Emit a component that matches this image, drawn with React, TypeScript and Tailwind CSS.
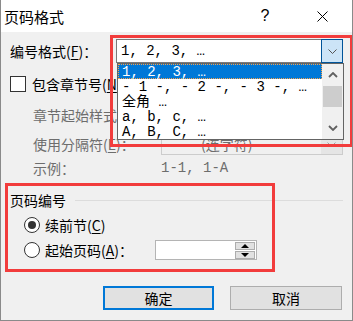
const Key = ({ k }: { k: string }) => (
  <span>
    (<span className="underline underline-offset-2">{k}</span>)
  </span>
);

const ScrollArrow = ({ up }: { up?: boolean }) => (
  <svg width="10" height="6" viewBox="0 0 10 6">
    <polyline
      points={up ? '1,5 5,1 9,5' : '1,1 5,5 9,1'}
      fill="none"
      stroke="#606060"
      strokeWidth="1.8"
    />
  </svg>
);

const SpinTriangle = ({ up }: { up?: boolean }) => (
  <svg width="8" height="4" viewBox="0 0 8 4">
    <polygon points={up ? '0,4 4,0 8,4' : '0,0 8,0 4,4'} fill="#000" />
  </svg>
);

const mono = "font-['Liberation_Mono','Noto_Sans_CJK_SC',monospace]";

const listItems = ['- 1 -, - 2 -, - 3 -, …', '全角 …', 'a, b, c, …', 'A, B, C, …'];

export default function App() {
  return (
    <div className="relative w-[353px] h-[321px] bg-[#f0f0f0] border-x border-b border-[#8a8a8a] overflow-hidden text-[14px] text-black font-['Noto_Sans_CJK_SC',sans-serif] leading-none">
      {/* title bar */}
      <div className="flex items-center h-[32px] bg-white pl-[3px] pr-[7px]">
        <span className="text-[15px]">页码格式</span>
        <span className="ml-auto w-[46px] text-center text-[16px] font-['Liberation_Sans',sans-serif]">?</span>
        <span className="ml-[11px] w-[46px] flex justify-center">
          <svg width="11" height="11" viewBox="0 0 11 11">
            <path d="M0.5 0.5 L10.5 10.5 M10.5 0.5 L0.5 10.5" stroke="#000" strokeWidth="1" />
          </svg>
        </span>
      </div>

      <div className="flex flex-col pl-[9px] pr-[9px]">
        {/* number format */}
        <div className="flex items-center h-[24px] mt-[7px]">
          <span className="w-[106px] shrink-0">
            编号格式<Key k="F" />：
          </span>
          <div className="flex flex-1 h-full bg-white">
            <div className={`flex-1 flex items-center pl-[4px] border-y border-l border-[#7a7a7a] whitespace-pre ${mono}`}>
              1, 2, 3, …
            </div>
            <div className="w-[22px] h-full border border-[#005499] bg-[#cce4f7] flex items-center justify-center">
              <svg width="9" height="5" viewBox="0 0 9 5">
                <polyline points="0.5,0.5 4.5,4.5 8.5,0.5" fill="none" stroke="#555" strokeWidth="1" />
              </svg>
            </div>
          </div>
        </div>

        {/* include chapter */}
        <div className="flex items-center h-[24px] mt-[9px]">
          <span className="w-[16px] h-[16px] border border-[#333] bg-white shrink-0" />
          <span className="ml-[6px]">
            包含章节号<Key k="N" />
          </span>
        </div>

        {/* chapter style (combo hidden behind the open list) */}
        <div className="flex items-center h-[22px] mt-[8px] text-[#6d6d6d]">
          <span className="ml-[23px] w-[128px] shrink-0">
            章节起始样式<Key k="P" />：
          </span>
          <div className="flex-1 h-full border border-[#cccccc] bg-[#f0f0f0]" />
        </div>

        {/* separator */}
        <div className="flex items-center h-[22px] mt-[7px] text-[#6d6d6d]">
          <span className="ml-[23px] w-[128px] shrink-0">
            使用分隔符<Key k="E" />：
          </span>
          <div className="flex-1 h-full border border-[#cccccc] bg-[#f0f0f0] flex items-center">
            <span className="pl-[6px] w-[39px]">-</span>
            <span>(连字符)</span>
            <span className="ml-auto w-[21px] h-full bg-[#e5e5e5] flex items-center justify-center">
              <svg width="9" height="5" viewBox="0 0 9 5">
                <polyline points="0.5,0.5 4.5,4.5 8.5,0.5" fill="none" stroke="#a0a0a0" strokeWidth="1" />
              </svg>
            </span>
          </div>
        </div>

        {/* example */}
        <div className="flex items-center h-[18px] mt-[4px] text-[#6d6d6d]">
          <span className="ml-[23px] w-[128px] shrink-0">示例：</span>
          <span className={`whitespace-pre ${mono}`}>1-1, 1-A</span>
        </div>

        {/* group title */}
        <div className="flex items-center h-[16px] mt-[15px]">
          <span className="w-[56px] shrink-0">页码编号</span>
          <span className="ml-[9px] flex-1 h-px bg-[#dcdcdc]" />
        </div>

        {/* continue */}
        <div className="flex items-center h-[20px] mt-[7px] pl-[14px]">
          <span className="w-[16px] h-[16px] rounded-full border border-[#333] bg-white flex items-center justify-center">
            <span className="w-[8px] h-[8px] rounded-full bg-[#333]" />
          </span>
          <span className="ml-[5px]">
            续前节<Key k="C" />
          </span>
        </div>

        {/* start at */}
        <div className="flex items-center h-[20px] mt-[5px] pl-[14px]">
          <span className="w-[16px] h-[16px] rounded-full border border-[#333] bg-white" />
          <span className="ml-[5px] w-[110px] shrink-0">
            起始页码<Key k="A" />：
          </span>
          <div className="w-[102px] h-[20px] border border-[#b4b4b4] bg-white flex justify-end pr-[1px] pt-[1px]">
            <div className="flex flex-col w-[20px] gap-px">
              <span className="h-[8px] bg-[#e1e1e1] border border-[#adadad] flex items-center justify-center">
                <SpinTriangle up />
              </span>
              <span className="h-[8px] bg-[#e1e1e1] border border-[#adadad] flex items-center justify-center">
                <SpinTriangle />
              </span>
            </div>
          </div>
        </div>

        {/* buttons */}
        <div className="flex justify-end gap-[16px] h-[24px] mt-[26px] pr-[1px]">
          <button className="w-[111px] h-full border-2 border-[#0078d7] bg-[#e1e1e1]">确定</button>
          <button className="w-[112px] h-full border border-[#adadad] bg-[#e1e1e1]">取消</button>
        </div>
      </div>

      {/* open dropdown list */}
      <div className="absolute left-[116px] top-[63px] w-[227px] h-[77px] border border-[#646464] bg-white flex">
        <div className={`flex-1 flex flex-col ${mono}`}>
          <div className="h-[15px] flex items-center pl-[3px] bg-[#0078d7] text-white border border-dotted border-[#f7a24b] whitespace-pre">
            1, 2, 3, …
          </div>
          {listItems.map((item) => (
            <div key={item} className="h-[15px] flex items-center pl-[4px] whitespace-pre">
              {item}
            </div>
          ))}
        </div>
        <div className="w-[21px] bg-[#f0f0f0] flex flex-col">
          <div className="h-[22px] flex items-center justify-center">
            <ScrollArrow up />
          </div>
          <div className="h-[21px] mx-[1px] bg-[#cdcdcd]" />
          <div className="flex-1" />
          <div className="h-[22px] flex items-center justify-center">
            <ScrollArrow />
          </div>
        </div>
      </div>

      {/* annotation boxes */}
      <div className="absolute left-[109px] top-[35px] w-[243px] h-[112px] border-[3px] border-[#f23c3c]" />
      <div className="absolute left-[4px] top-[183px] w-[270px] h-[89px] border-[3px] border-[#f23c3c]" />
    </div>
  );
}
